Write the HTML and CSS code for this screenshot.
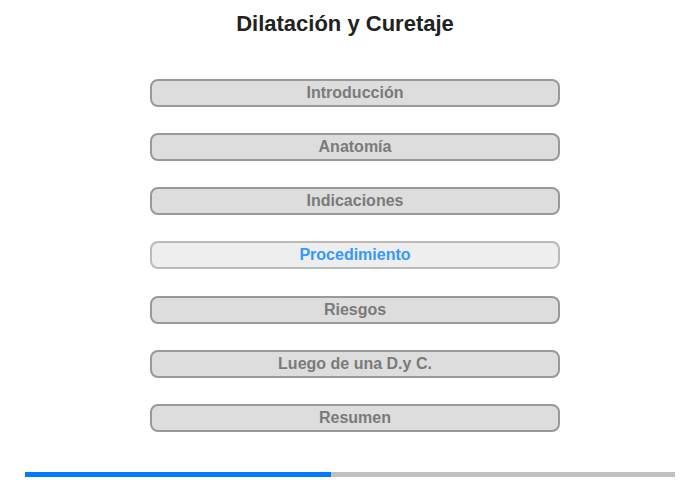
FILE: index.html
```html
<!DOCTYPE html>
<html lang="es">
<head>
    <meta charset="UTF-8">
    <title>Dilatación y Curetaje</title>
    <link rel="stylesheet" href="styles.css">
</head>
<body>
    <h1 class="title">Dilatación y Curetaje</h1>
    <div class="menu">
        <button class="menu-btn">Introducción</button>
        <button class="menu-btn">Anatomía</button>
        <button class="menu-btn">Indicaciones</button>
        <button class="menu-btn active">Procedimiento</button>
        <button class="menu-btn">Riesgos</button>
        <button class="menu-btn">Luego de una D.y C.</button>
        <button class="menu-btn">Resumen</button>
    </div>
    <div class="progress">
        <div class="progress-fill" style="width: 47%;"></div>
    </div>
</body>
</html>
```

FILE: styles.css
```css
body, html {
    margin: 0;
    padding: 0;
    width: 100%;
    height: 100%;
    background: white;
    font-family: "Liberation Sans", Arial, sans-serif;
}

body {
    display: flex;
    flex-direction: column;
}

.title {
    margin: 0;
    padding: 12px 10px 0 0;
    font-size: 22px;
    line-height: 24px;
    text-align: center;
    color: #222;
}

.menu {
    display: flex;
    flex-direction: column;
    gap: 26.17px;
    margin: 43px 0 0 150px;
    width: 410px;
}

.menu-btn {
    height: 28px;
    padding: 0;
    background: #dddddd;
    border: 2px solid #999;
    border-radius: 8px;
    color: #7a7a7a;
    font-family: inherit;
    font-size: 16px;
    font-weight: bold;
    cursor: pointer;
}

.menu-btn.active {
    background: #eeeeee;
    border-color: #bbb;
    color: #3399ff;
}

.progress {
    margin: 40px 25px 0 25px;
    height: 5px;
    background: #c0c0c0;
}

.progress-fill {
    height: 100%;
    background: #007bff;
}
```
